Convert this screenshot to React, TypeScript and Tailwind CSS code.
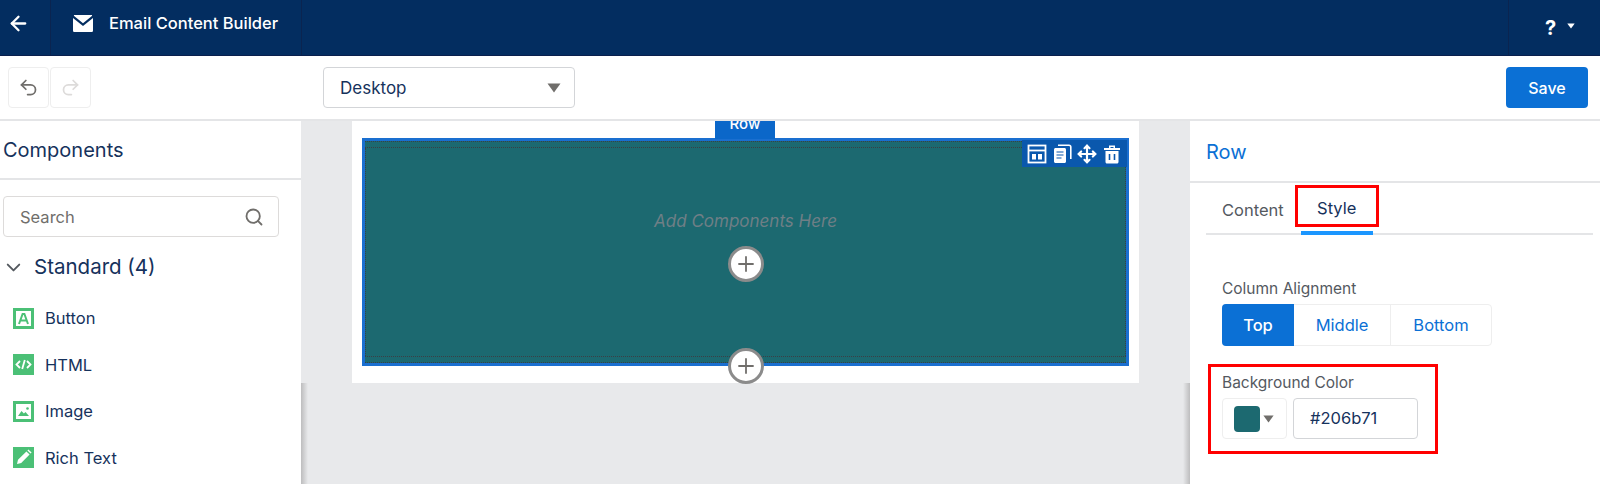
import { ArrowLeft, ChevronDown, Move, Plus, Redo2, Search, Undo2 } from "lucide-react";
import type { ReactNode } from "react";

const Caret = ({ className }: { className: string }) => (
  <svg viewBox="0 0 14 10" className={className} fill="currentColor">
    <path d="M0.5 0.5h13L7 9.5z" />
  </svg>
);

const Tile = ({ children }: { children: ReactNode }) => (
  <svg viewBox="0 0 21 21" className="h-[21px] w-[21px] shrink-0">
    <rect width="21" height="21" fill="#4bc076" />
    {children}
  </svg>
);

const components: { label: string; icon: ReactNode }[] = [
  {
    label: "Button",
    icon: (
      <>
        <rect x="3" y="3" width="15" height="15" fill="#fff" />
        <path d="M6 16l3.6-10h1.8L15 16M7.4 12.6h6.2" fill="none" stroke="#4bc076" strokeWidth="2" />
      </>
    ),
  },
  {
    label: "HTML",
    icon: (
      <path d="M7 7l-3.5 3.5L7 14M14 7l3.5 3.5L14 14M11.8 6l-2.6 9" fill="none" stroke="#fff" strokeWidth="1.8" />
    ),
  },
  {
    label: "Image",
    icon: (
      <>
        <rect x="3" y="3" width="15" height="15" fill="#fff" />
        <path d="M5 15l3.5-5 2.4 2.6 1.6-1.6 3.5 4z" fill="#4bc076" />
        <circle cx="14.5" cy="7.5" r="1.3" fill="#4bc076" />
      </>
    ),
  },
  {
    label: "Rich Text",
    icon: (
      <path d="M4 17l1-4.2 8.4-8.4 3.2 3.2-8.4 8.4zM14.4 3.4l1-1 3.2 3.2-1 1z" fill="#fff" />
    ),
  },
];

const PlusButton = ({ className }: { className: string }) => (
  <div className={`flex h-9 w-9 items-center justify-center rounded-full border-[3px] border-[#8b8b8b] bg-white text-[#706e6b] ${className}`}>
    <Plus size={24} strokeWidth={1.8} />
  </div>
);

export default function App() {
  return (
    <div className="flex h-[484px] w-[1600px] flex-col overflow-hidden bg-white font-['Inter',sans-serif] text-[#16325c]">
      <header className="flex h-[56px] shrink-0 items-center border-b border-[#0a1f4d] bg-[#032d60] text-white">
        <div className="flex h-full w-[51px] items-center border-r border-[#0a2450] pb-[9px] pl-[7px]">
          <ArrowLeft size={23} strokeWidth={2.4} />
        </div>
        <div className="flex h-full w-[251px] items-center gap-[16px] border-r border-[#0a2450] pb-[9px] pl-[22px]">
          <svg viewBox="0 0 20 17" className="h-[17px] w-[20px]" fill="currentColor">
            <path d="M1.4 0h17.2c.5 0 .7.5.3.9L10 8.2 1.1.9C.7.5.9 0 1.4 0zM0 3l10 8L20 3v12.4c0 .9-.7 1.6-1.6 1.6H1.6C.7 17 0 16.3 0 15.4z" />
          </svg>
          <span className="text-[16.5px] font-medium whitespace-nowrap">Email Content Builder</span>
        </div>
        <div className="ml-auto flex h-full w-[92px] items-center gap-[11px] border-l border-[#0a2450] pl-[36px]">
          <span className="text-[20px] font-bold">?</span>
          <Caret className="mb-[3px] h-[6px] w-[8px]" />
        </div>
      </header>

      <div className="flex h-[65px] shrink-0 items-center border-b-2 border-[#e4e5e7] pr-[12px] pl-[8px]">
        <button className="flex h-[41px] w-[41px] items-center justify-center rounded border border-[#eeeeee] text-[#706e6b]">
          <Undo2 size={21} strokeWidth={2} />
        </button>
        <button className="ml-[1px] flex h-[41px] w-[41px] items-center justify-center rounded border border-[#eeeeee] text-[#dddbda]">
          <Redo2 size={21} strokeWidth={2} />
        </button>
        <div className="ml-[232px] flex h-[41px] w-[252px] items-center justify-between rounded border border-[#d3d5d8] pr-[13px] pl-[16px] text-[17px]">
          <span className="pt-[2px]">Desktop</span>
          <Caret className="h-[10px] w-[14px] text-[#706e6b]" />
        </div>
        <button className="ml-auto h-[41px] w-[82px] rounded bg-[#0b70d5] text-[16px] font-medium text-white">Save</button>
      </div>

      <div className="flex min-h-0 flex-1">
        <aside className="w-[301px] shrink-0 bg-white">
          <div className="flex h-[59px] items-center border-b-2 border-[#e4e5e7] pl-[3px] text-[20px]">Components</div>
          <div className="mt-[16px] ml-[3px] flex h-[41px] w-[276px] items-center justify-between rounded border border-[#dddbda] pr-[14px] pl-[16px] text-[16.5px] text-[#706e6b]">
            <span className="pt-[1px]">Search</span>
            <Search size={20} strokeWidth={2.2} />
          </div>
          <div className="mt-[15px] flex items-center gap-[9px] pl-[2px] text-[20.5px]">
            <ChevronDown size={23} strokeWidth={2} className="text-[#54595f]" />
            <span>Standard (4)</span>
          </div>
          <ul className="mt-[25px] flex flex-col gap-[25.5px] pl-[13px]">
            {components.map((c) => (
              <li key={c.label} className="flex h-[21px] items-center gap-[11px] text-[16.5px]">
                <Tile>{c.icon}</Tile>
                <span className="pt-[1px]">{c.label}</span>
              </li>
            ))}
          </ul>
        </aside>

        <main className="relative min-w-0 flex-1 bg-[#e8e9eb] pl-[51px]">
          <div className="absolute top-[262px] bottom-0 left-0 w-[7px] bg-gradient-to-r from-[#bdbdbe] to-[#e8e9eb]" />
          <div className="absolute top-[262px] right-0 bottom-0 w-[7px] bg-gradient-to-l from-[#bdbdbe] to-[#e8e9eb]" />
          <div className="h-[262px] w-[787px] bg-white px-[10px] pt-[17px]">
            <div className="relative flex h-[228px] flex-col border-[3px] border-[#1a6fd0] bg-[#1c6970]">
              <div className="absolute -top-[20px] left-[350px] flex h-[18px] w-[60px] items-start justify-center overflow-hidden bg-[#0b67c9] text-[15px] leading-[5px] font-medium text-white">
                Row
              </div>
              <div className="absolute -top-px -right-px z-10 flex h-[27px] w-[105px] items-center justify-around bg-[#0a58ad] px-[3px] text-white">
                <svg viewBox="0 0 20 20" className="h-[20px] w-[20px]" fill="none" stroke="currentColor" strokeWidth="1.8">
                  <rect x="1.5" y="1.5" width="17" height="17" />
                  <path d="M1.5 6.5h17" />
                  <path d="M5 10h4v5.5H5zM11 10h4v5.5h-4z" fill="currentColor" stroke="none" />
                </svg>
                <svg viewBox="0 0 20 20" className="h-[20px] w-[20px]" fill="currentColor">
                  <path d="M2 5.5c0-.8.7-1.5 1.5-1.5h9c.8 0 1.5.7 1.5 1.5v12c0 .8-.7 1.5-1.5 1.5h-9c-.8 0-1.5-.7-1.5-1.5z" />
                  <path d="M6 1.2h11c1 0 1.8.8 1.8 1.8v12" fill="none" stroke="currentColor" strokeWidth="1.6" />
                  <path d="M4.5 8h7M4.5 11h7M4.5 14h5" stroke="#0a58ad" strokeWidth="1.2" />
                </svg>
                <Move size={20} strokeWidth={2.6} />
                <svg viewBox="0 0 20 20" className="h-[20px] w-[20px]" fill="currentColor">
                  <path d="M2 4h16v2H2zM7 1.5h6V4h-1.5V3h-3v1H7zM3.5 7h13v11c0 .8-.7 1.5-1.5 1.5H5c-.8 0-1.5-.7-1.5-1.5z" />
                  <path d="M7.5 10v6M12.5 10v6" stroke="#0a58ad" strokeWidth="1.6" />
                </svg>
              </div>
              <div className="h-[7px] shrink-0 border-y border-dotted border-[#3a3f45]" />
              <div className="flex flex-1 flex-col items-center border-x border-dotted border-[#3a3f45] pt-[61px]">
                <span className="text-[17px] leading-[24px] text-[#6f7f86] italic">Add Components Here</span>
                <PlusButton className="mt-[13px]" />
              </div>
              <div className="h-[7px] shrink-0 border-y border-dotted border-[#3a3f45]" />
              <PlusButton className="absolute -bottom-[21px] left-[363px] z-10" />
            </div>
          </div>
        </main>

        <aside className="w-[410px] shrink-0 bg-white">
          <div className="flex h-[62px] items-center border-b-2 border-[#e4e5e7] pt-[2px] pl-[16px] text-[20px] text-[#0b70d5]">Row</div>
          <div className="mr-[7px] ml-[16px] flex h-[52px] border-b-2 border-[#e4e5e7] pl-[16px] text-[16.5px]">
            <span className="pt-[15px] text-[#54595f]">Content</span>
            <div className="relative ml-[11px] h-[50px]">
              <div className="mt-[2px] flex h-[42px] w-[84px] items-center justify-center border-[3px] border-[#ff0000] pt-[5px]">Style</div>
              <div className="absolute bottom-[-2px] left-[6px] h-[4px] w-[72px] bg-[#1b96ff]" />
            </div>
          </div>
          <div className="pt-[45px] pl-[32px]">
            <div className="text-[15.5px] leading-[18px] text-[#54595f]">Column Alignment</div>
            <div className="mt-[6px] flex h-[42px] w-[270px] rounded border border-[#eeeeee] text-[16.5px] text-[#0b70d5]">
              <div className="-my-px -ml-px flex w-[72px] items-center justify-center rounded-l bg-[#0b70d5] font-medium text-white">Top</div>
              <div className="flex w-[97px] items-center justify-center border-r border-[#eeeeee]">Middle</div>
              <div className="flex flex-1 items-center justify-center">Bottom</div>
            </div>
          </div>
          <div className="mt-[18px] ml-[18px] h-[90px] w-[230px] border-[3px] border-[#ff0000] pt-[7px] pl-[11px]">
            <div className="text-[15.5px] leading-[18px] text-[#54595f]">Background Color</div>
            <div className="mt-[6px] flex gap-[6px]">
              <div className="flex h-[41px] w-[65px] items-center rounded border border-[#eeeeee] pl-[11px]">
                <div className="h-[26px] w-[26px] rounded-sm bg-[#1c6970]" />
                <Caret className="ml-[3px] h-[8px] w-[11px] text-[#706e6b]" />
              </div>
              <div className="flex h-[41px] w-[125px] items-center rounded border border-[#d3d5d8] pl-[16px] text-[16.5px]">#206b71</div>
            </div>
          </div>
        </aside>
      </div>
    </div>
  );
}
